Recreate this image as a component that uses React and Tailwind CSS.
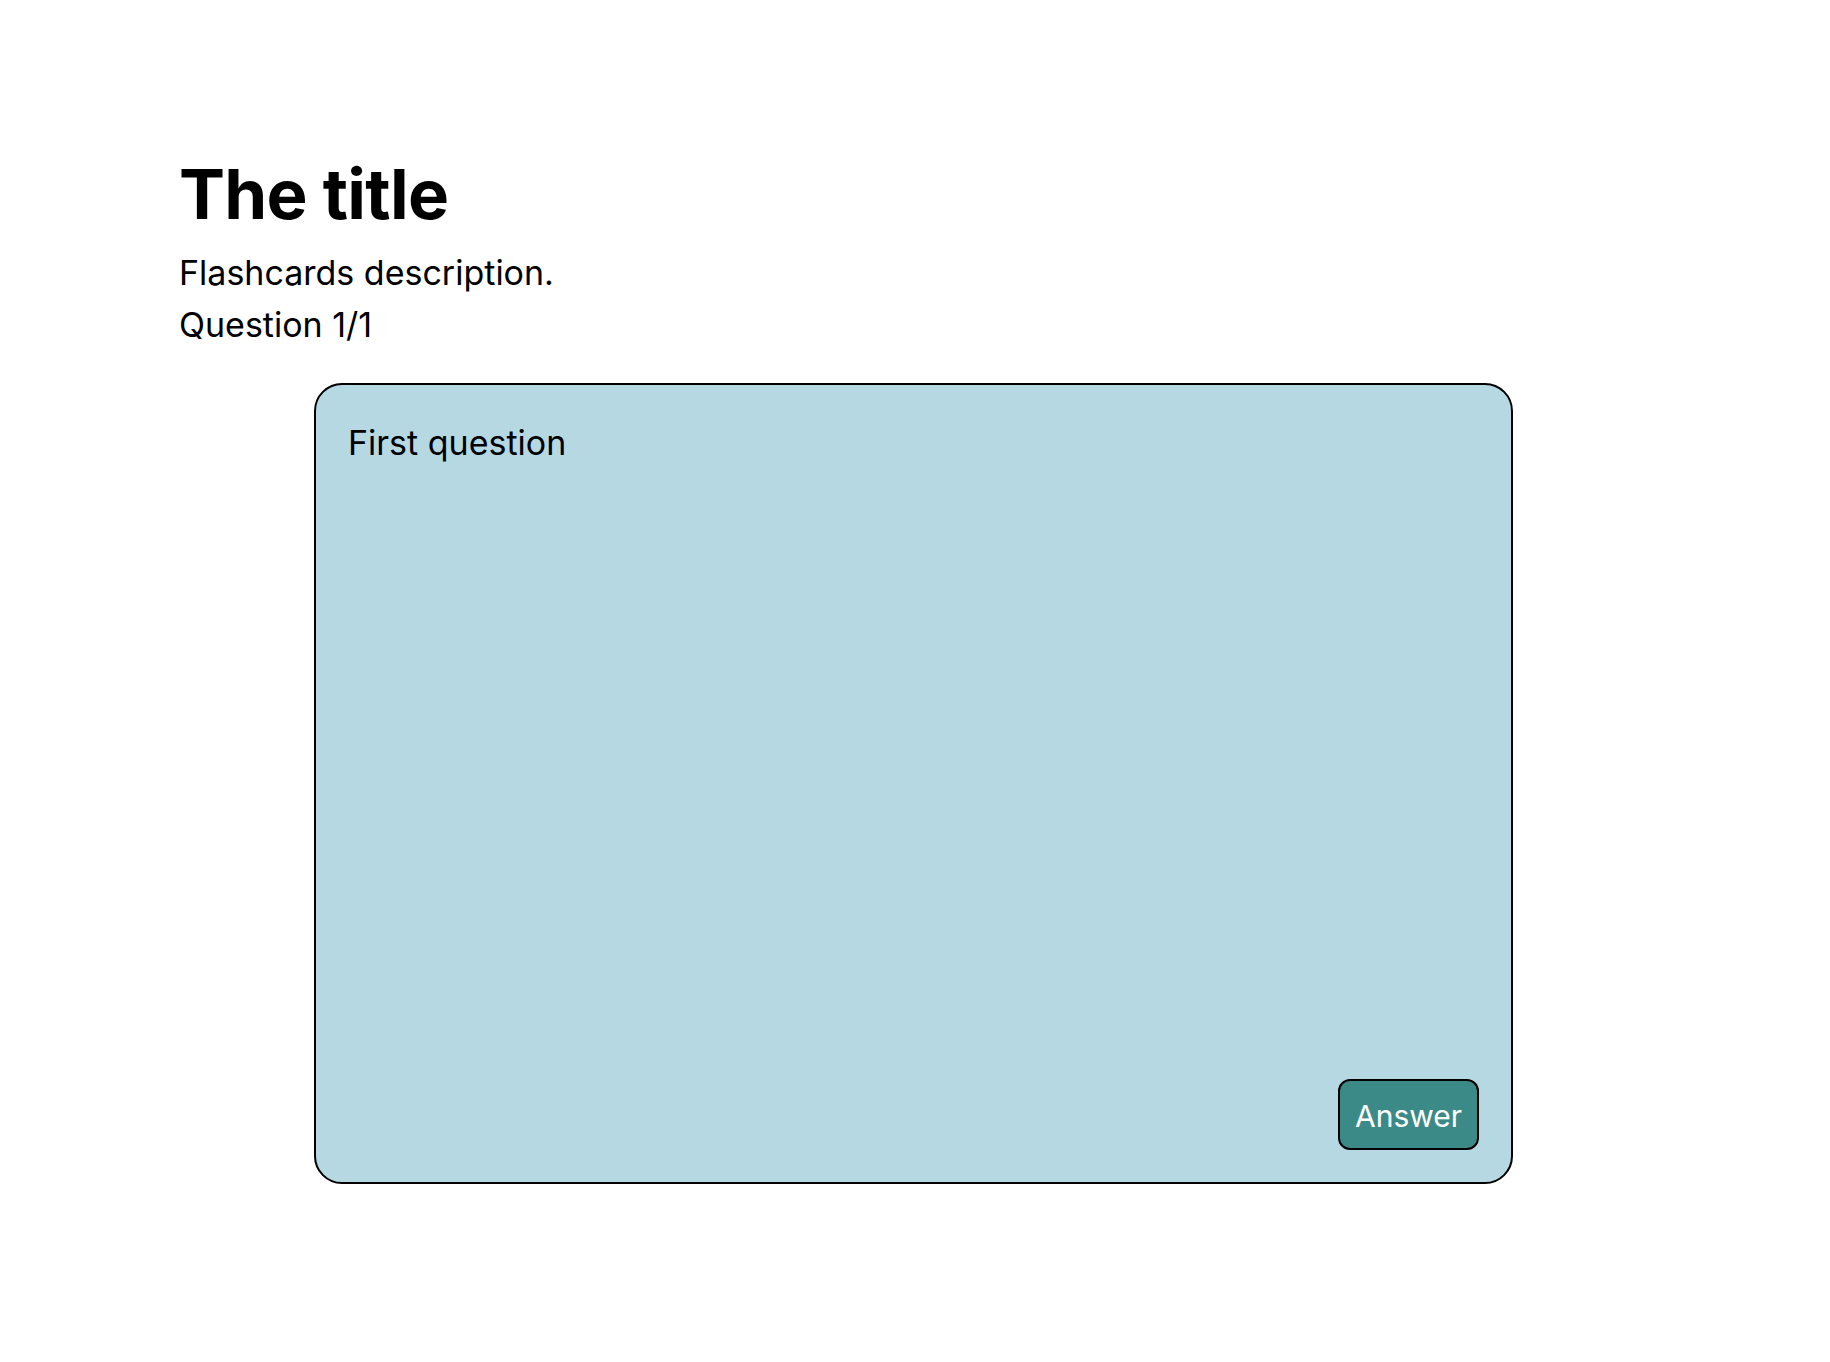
const App = () => {
  return (
    <div className="min-h-screen bg-white text-black font-['Inter',sans-serif]">
      <div className="pl-[179px] pt-[160px]">
        <h1 className="text-[69px] font-bold leading-none tracking-[-0.7px]">The title</h1>
        <p className="mt-[17px] text-[34px] leading-[53px]">Flashcards description.</p>
        <p className="text-[34px] leading-[52px]">Question 1/1</p>
      </div>
      <div className="ml-[314px] mt-[32px] w-[1199px] h-[801px] bg-[#b6d8e3] border-2 border-black rounded-[28px] px-8 pt-[31px] pb-8 flex flex-col justify-between">
        <p className="text-[34px] leading-[53px]">First question</p>
        <button className="self-end w-[141px] h-[71px] pt-[3px] bg-[#3c8a88] border-2 border-black rounded-[12px] text-white text-[30px]">
          Answer
        </button>
      </div>
    </div>
  );
};

export default App;
